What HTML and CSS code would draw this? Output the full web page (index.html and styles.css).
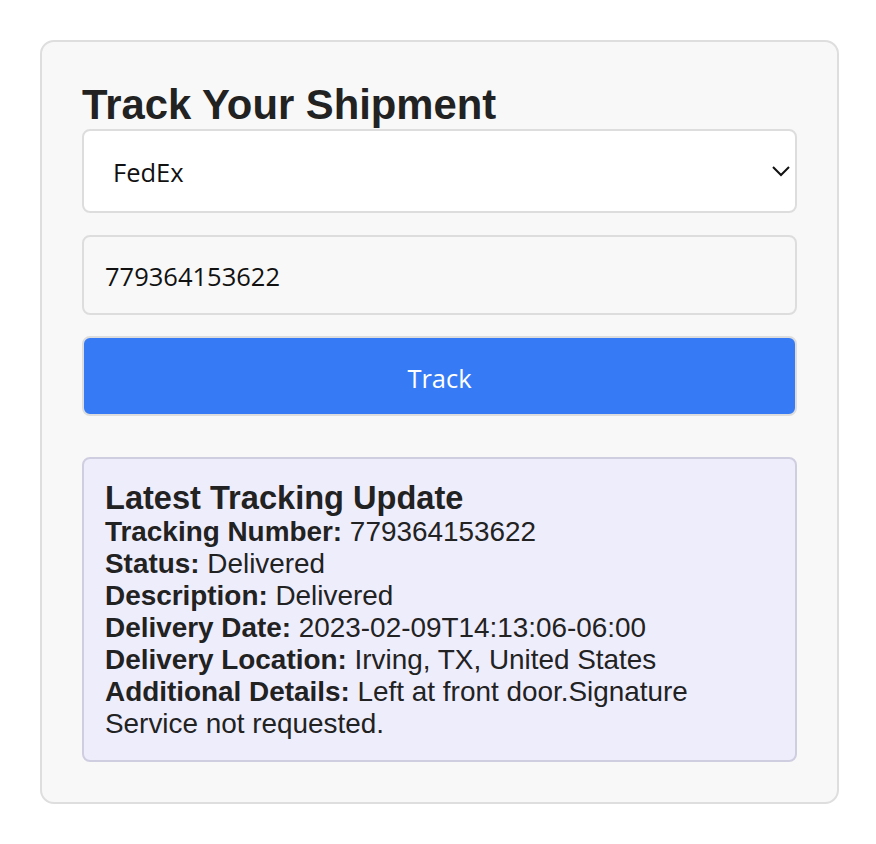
FILE: index.html
```html
<!DOCTYPE html>
<html>
<head>
<meta charset="utf-8">
<link rel="stylesheet" href="styles.css">
</head>
<body>
<div class="card">
  <h2 class="title">Track Your Shipment</h2>
  <div class="select-wrap">
    <select class="carrier">
      <option>FedEx</option>
      <option>UPS</option>
      <option>USPS</option>
    </select>
    <svg class="chev" width="18" height="11" viewBox="0 0 18 11"><path d="M1 1 L9 9 L17 1" fill="none" stroke="#111" stroke-width="2"/></svg>
  </div>
  <input class="number" type="text" value="779364153622">
  <button class="track">Track</button>
  <div class="result">
    <h3 class="result-title">Latest Tracking Update</h3>
    <div class="line"><b>Tracking Number:</b> 779364153622</div>
    <div class="line"><b>Status:</b> Delivered</div>
    <div class="line"><b>Description:</b> Delivered</div>
    <div class="line"><b>Delivery Date:</b> 2023-02-09T14:13:06-06:00</div>
    <div class="line"><b>Delivery Location:</b> Irving, TX, United States</div>
    <div class="line"><b>Additional Details:</b> Left at front door.Signature Service not requested.</div>
  </div>
</div>
</body>
</html>
```
FILE: styles.css
```css
html, body {
  margin: 0;
  padding: 0;
  background: #ffffff;
}
body {
  font-family: "Liberation Sans", Arial, sans-serif;
  color: #222222;
}
.card {
  box-sizing: border-box;
  width: 799px;
  margin: 40px 0 0 40px;
  padding: 39px 40px 40px 40px;
  background: #f8f8f8;
  border: 2px solid #dedede;
  border-radius: 14px;
  display: flex;
  flex-direction: column;
}
.title {
  margin: 0;
  font-size: 41.8px;
  font-weight: bold;
  line-height: 48px;
  color: #222222;
}
.select-wrap {
  position: relative;
  height: 84px;
}
.carrier {
  appearance: none;
  -webkit-appearance: none;
  box-sizing: border-box;
  width: 100%;
  height: 84px;
  margin: 0;
  padding: 2px 0 0 29px;
  background: #ffffff;
  border: 2px solid #dddddd;
  border-radius: 8px;
  font-family: "Open Sans", "Noto Sans", sans-serif;
  font-size: 25.5px;
  color: #111111;
  outline: none;
}
.chev {
  position: absolute;
  top: 37px;
  right: 7px;
  pointer-events: none;
}
.number {
  box-sizing: border-box;
  width: 100%;
  height: 80px;
  margin: 22px 0 0 0;
  padding: 2px 0 0 21px;
  background: #f8f8f8;
  border: 2px solid #dddddd;
  border-radius: 8px;
  font-family: "Open Sans", "Noto Sans", sans-serif;
  font-size: 25.5px;
  color: #111111;
  outline: none;
}
.track {
  box-sizing: border-box;
  width: 100%;
  height: 80px;
  margin: 21px 0 0 0;
  padding: 3px 0 0 0;
  background: #367bf5;
  border: 2px solid #dddddd;
  border-radius: 8px;
  font-family: "Open Sans", "Noto Sans", sans-serif;
  font-size: 25.5px;
  color: #ffffff;
}
.result {
  box-sizing: border-box;
  margin-top: 41px;
  padding: 20px 21px 20px 21px;
  background: #eeedfc;
  border: 2px solid #cfcde0;
  border-radius: 8px;
  font-size: 27.9px;
  line-height: 32px;
  color: #222222;
}
.result-title {
  margin: 0;
  font-size: 32.6px;
  line-height: 37px;
  font-weight: bold;
}
.line b {
  font-weight: bold;
}
```
